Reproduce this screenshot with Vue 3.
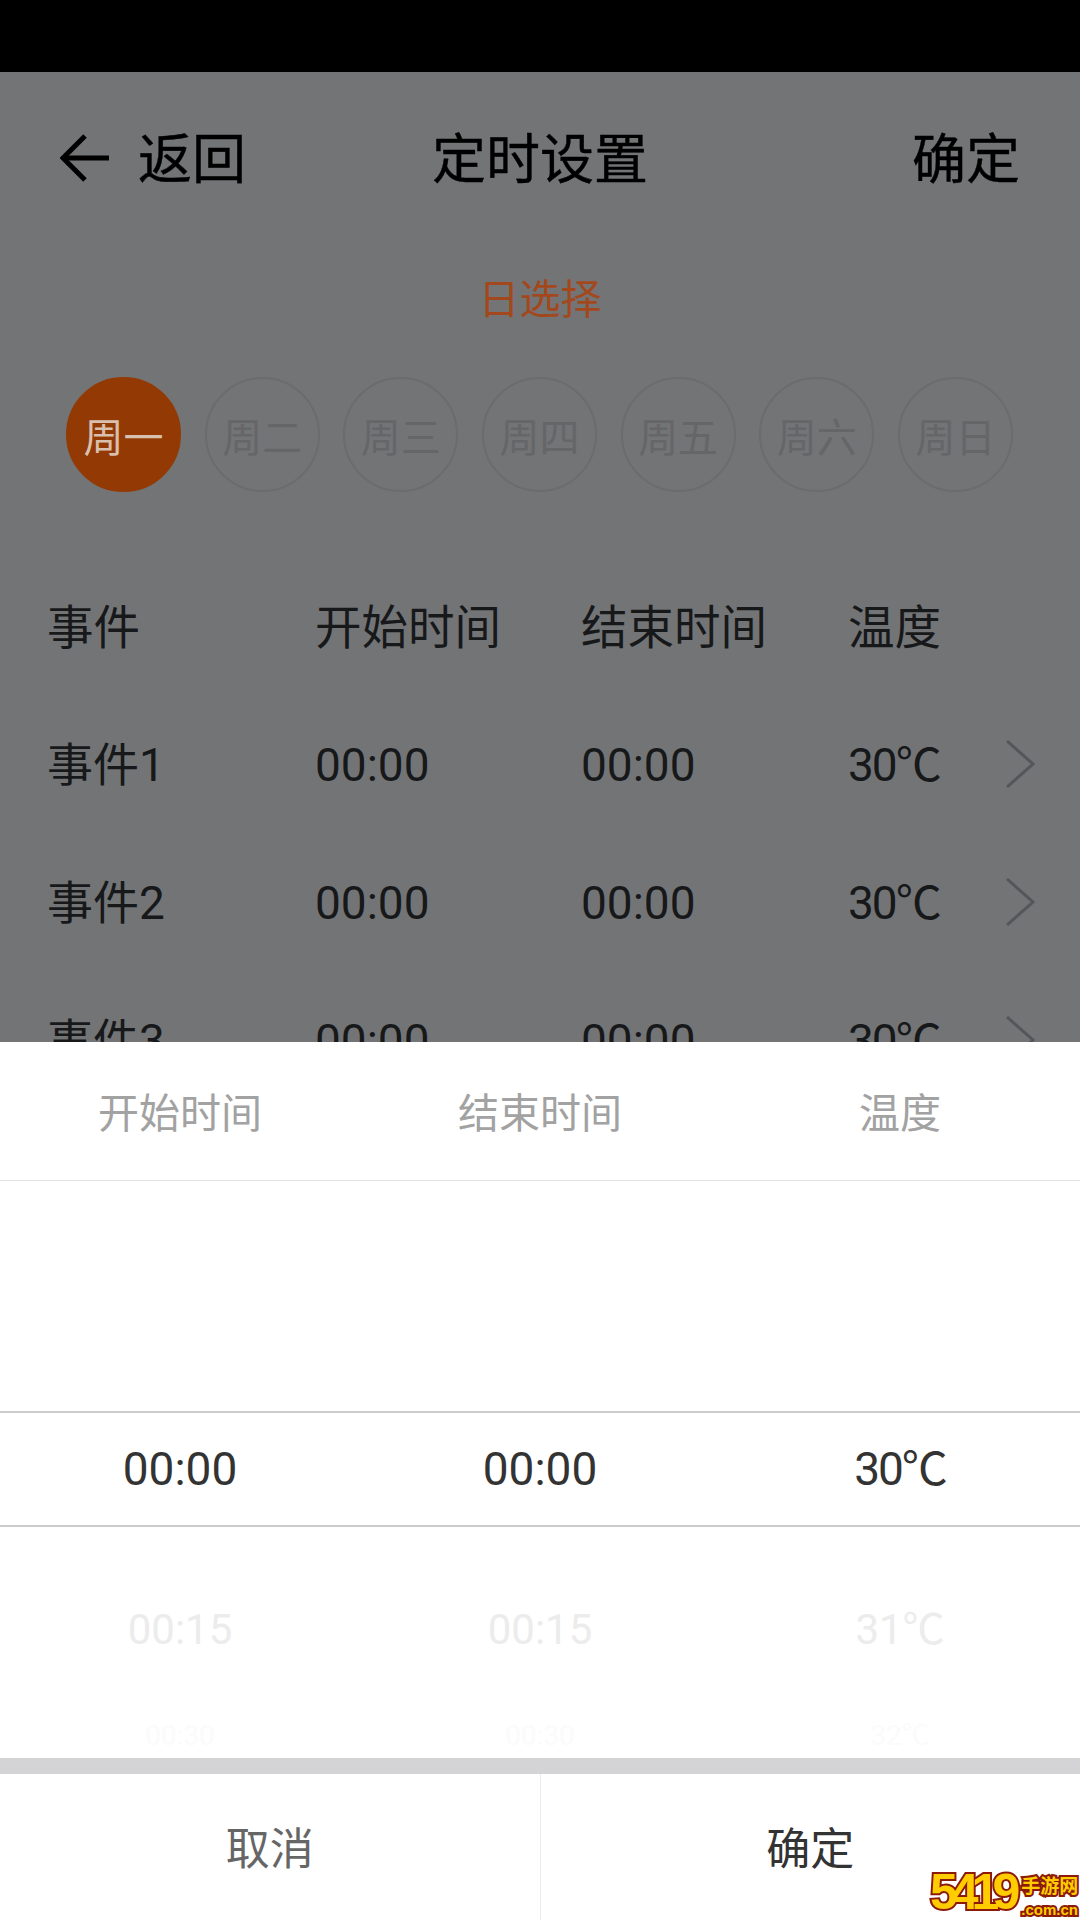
<script setup>
const days = ['周一', '周二', '周三', '周四', '周五', '周六', '周日']
const columns = ['事件', '开始时间', '结束时间', '温度']
const events = [
  { name: '事件1', start: '00:00', end: '00:00', temp: '30℃' },
  { name: '事件2', start: '00:00', end: '00:00', temp: '30℃' },
  { name: '事件3', start: '00:00', end: '00:00', temp: '30℃' }
]
const sheetTitles = ['开始时间', '结束时间', '温度']
</script>

<template>
  <div class="screen">
    <div class="status"></div>
    <div class="page">
      <div class="nav">
        <div class="nav-back">
          <svg class="back-icon" width="50" height="48" viewBox="0 0 50 48" fill="none" stroke="#000" stroke-width="5">
            <polyline points="25 2 3 24 25 46"></polyline>
            <line x1="3" y1="24" x2="49" y2="24"></line>
          </svg>
          <span class="nav-text">返回</span>
        </div>
        <div class="nav-title nav-text">定时设置</div>
        <div class="nav-text">确定</div>
      </div>

      <div class="sub-title">日选择</div>

      <div class="days">
        <div v-for="(day, index) in days" :key="day" class="day" :class="{ active: index === 0 }">{{ day }}</div>
      </div>

      <div class="table">
        <div class="row head">
          <div v-for="col in columns" :key="col">{{ col }}</div>
        </div>
        <div v-for="ev in events" :key="ev.name" class="row">
          <div>{{ ev.name }}</div>
          <div>{{ ev.start }}</div>
          <div>{{ ev.end }}</div>
          <div class="temp">{{ ev.temp }}</div>
          <svg class="chevron" width="30" height="48" viewBox="0 0 30 48" fill="none" stroke="#55565a" stroke-width="3">
            <polyline points="2 1 28 24 2 47"></polyline>
          </svg>
        </div>
      </div>
    </div>

    <!-- 底部弹层 -->
    <div class="sheet">
      <div class="sheet-head">
        <div v-for="title in sheetTitles" :key="title">{{ title }}</div>
      </div>
      <div class="wheel">
        <div class="wheel-row selected">
          <div>00:00</div>
          <div>00:00</div>
          <div class="temp">30℃</div>
        </div>
        <div class="wheel-row next">
          <div>00:15</div>
          <div>00:15</div>
          <div>31℃</div>
        </div>
        <div class="wheel-row far">
          <div>00:30</div>
          <div>00:30</div>
          <div>32℃</div>
        </div>
      </div>
      <div class="band"></div>
      <div class="actions">
        <div class="action cancel">取消</div>
        <div class="action confirm">确定</div>
      </div>
    </div>

    <div class="mark">
      <span class="mark-num">5419</span>
      <span class="mark-side">
        <span class="mark-cn">手游网</span>
        <span class="mark-url">.com.cn</span>
      </span>
    </div>
  </div>
</template>

<style scoped>
.screen {
  position: relative;
  width: 1080px;
  height: 1920px;
  overflow: hidden;
  background: #737476;
  font-family: Roboto, "Noto Sans CJK SC", sans-serif;
}

.status {
  height: 72px;
  background: #000;
}

.nav {
  position: relative;
  height: 172px;
  display: flex;
  align-items: center;
  justify-content: space-between;
  padding: 0 60px;
  font-size: 54px;
  line-height: 64px;
  color: #000;
  -webkit-text-stroke: 0.4px #000;
}

.nav-text {
  padding-top: 6px;
}

.nav-back {
  display: flex;
  align-items: center;
  gap: 28px;
}

.nav-title {
  position: absolute;
  left: 0;
  right: 0;
  text-align: center;
}

.sub-title {
  margin-top: 32px;
  height: 48px;
  line-height: 48px;
  text-align: center;
  font-size: 41px;
  color: #a3481c;
}

.days {
  margin-top: 53px;
  padding: 0 67px 0 66px;
  display: flex;
  justify-content: space-between;
}

.day {
  width: 115px;
  height: 115px;
  box-sizing: border-box;
  border: 2px solid #6b6c6e;
  border-radius: 50%;
  display: flex;
  align-items: center;
  justify-content: center;
  font-size: 40px;
  color: #656668;
}

.day.active {
  background: #933a04;
  border-color: #933a04;
  color: #d9bfae;
}

.table {
  margin-top: 66px;
  padding-left: 47px;
}

.row {
  position: relative;
  height: 138px;
  display: grid;
  grid-template-columns: 268px 266px 267px 1fr;
  align-items: center;
  font-size: 46px;
  line-height: 60px;
  color: #17181a;
}

.row.head {
  font-size: 46.5px;
  padding-top: 2px;
  box-sizing: border-box;
}

.temp {
  letter-spacing: -2px;
}

.chevron {
  position: absolute;
  right: 45px;
  top: 44px;
}

.sheet {
  position: absolute;
  left: 0;
  right: 0;
  top: 1042px;
  bottom: 0;
  background: #fff;
  display: flex;
  flex-direction: column;
}

.sheet-head {
  height: 139px;
  box-sizing: border-box;
  padding-top: 6px;
  display: grid;
  grid-template-columns: repeat(3, 1fr);
  align-items: center;
  text-align: center;
  font-size: 41px;
  line-height: 50px;
  color: #a2a2a2;
  border-bottom: 1px solid #e3e3e3;
}

.wheel {
  flex: 1;
  padding-top: 230px;
  overflow: hidden;
}

.wheel-row {
  display: grid;
  grid-template-columns: repeat(3, 1fr);
  align-items: center;
  text-align: center;
}

.selected {
  height: 116px;
  box-sizing: border-box;
  border-top: 2px solid #cbcbcb;
  border-bottom: 2px solid #cbcbcb;
  font-size: 46px;
  line-height: 60px;
  color: #333;
}

.next {
  margin-top: 57px;
  height: 92px;
  font-size: 42px;
  line-height: 50px;
  color: #ececec;
}

.far {
  margin-top: 40px;
  height: 40px;
  font-size: 28px;
  line-height: 40px;
  color: #fbfbfb;
}

.band {
  height: 16px;
  background: #d4d4d6;
}

.actions {
  height: 146px;
  display: flex;
}

.action {
  flex: 1;
  padding-top: 6px;
  display: flex;
  align-items: center;
  justify-content: center;
  font-size: 44px;
  line-height: 56px;
}

.cancel {
  color: #666;
  border-right: 1px solid #ececec;
}

.confirm {
  color: #333;
}

.mark {
  position: absolute;
  left: 930px;
  top: 1864px;
  display: flex;
  align-items: flex-end;
  font-family: "Liberation Sans", "Noto Sans CJK SC", sans-serif;
  font-weight: 700;
  color: #fc0;
  -webkit-text-stroke: 4px #8b1a0a;
  paint-order: stroke fill;
}

.mark-num {
  font-size: 50px;
  line-height: 56px;
  letter-spacing: -7px;
}

.mark-side {
  display: flex;
  flex-direction: column;
  margin-left: 8px;
  white-space: nowrap;
}

.mark-cn {
  font-size: 19px;
  line-height: 26px;
}

.mark-url {
  font-size: 15px;
  line-height: 20px;
}
</style>

<style>
html,
body {
  background: #737476;
}
</style>
